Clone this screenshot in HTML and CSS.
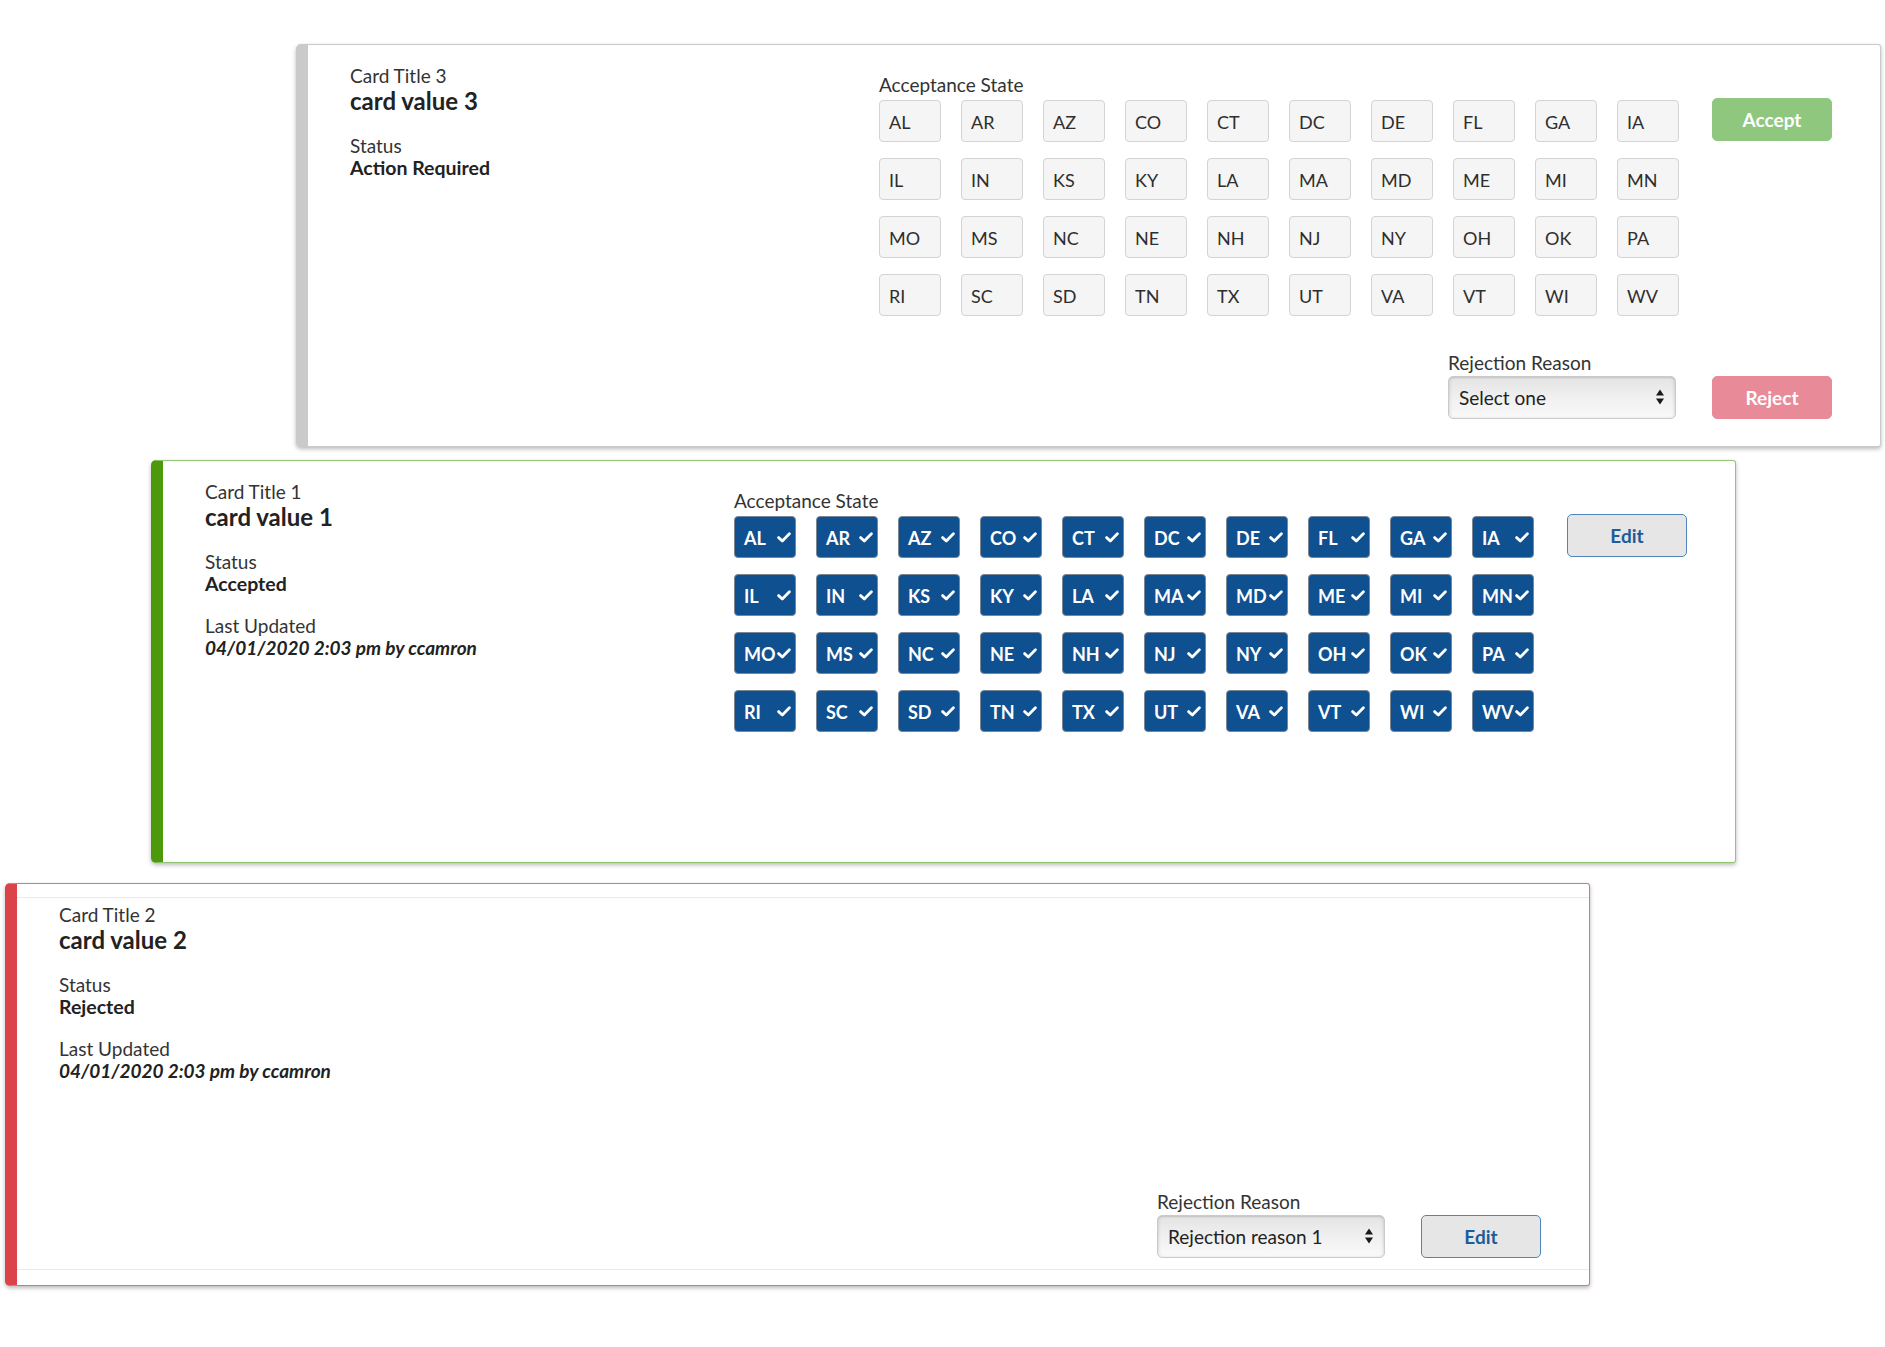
FILE: index.html
```html
<!DOCTYPE html>
<html lang="en">
<head>
<meta charset="utf-8">
<title>Cards</title>
<link rel="stylesheet" href="styles.css">
</head>
<body>
<div class="stack">

  <section class="card card--pending card--shift-2">
    <div class="info">
      <div class="field">
        <div class="label">Card Title 3</div>
        <div class="value value--title">card value 3</div>
      </div>
      <div class="field">
        <div class="label">Status</div>
        <div class="value">Action Required</div>
      </div>
    </div>
    <div class="states">
      <div class="label states-label">Acceptance State</div>
      <div class="state-grid">
        <button class="state">AL</button><button class="state">AR</button><button class="state">AZ</button><button class="state">CO</button><button class="state">CT</button><button class="state">DC</button><button class="state">DE</button><button class="state">FL</button><button class="state">GA</button><button class="state">IA</button>
        <button class="state">IL</button><button class="state">IN</button><button class="state">KS</button><button class="state">KY</button><button class="state">LA</button><button class="state">MA</button><button class="state">MD</button><button class="state">ME</button><button class="state">MI</button><button class="state">MN</button>
        <button class="state">MO</button><button class="state">MS</button><button class="state">NC</button><button class="state">NE</button><button class="state">NH</button><button class="state">NJ</button><button class="state">NY</button><button class="state">OH</button><button class="state">OK</button><button class="state">PA</button>
        <button class="state">RI</button><button class="state">SC</button><button class="state">SD</button><button class="state">TN</button><button class="state">TX</button><button class="state">UT</button><button class="state">VA</button><button class="state">VT</button><button class="state">WI</button><button class="state">WV</button>
      </div>
    </div>
    <div class="actions">
      <button class="btn btn--accept">Accept</button>
    </div>
    <div class="reason">
      <div class="label reason-label">Rejection Reason</div>
      <div class="select-wrap">
        <select class="select"><option>Select one</option></select>
        <svg class="select-arrows" viewBox="0 0 8 16" width="8" height="16"><polygon points="0,6.5 4,0.5 8,6.5"/><polygon points="0,9.5 4,15.5 8,9.5"/></svg>
      </div>
    </div>
    <div class="actions actions--bottom">
      <button class="btn btn--reject">Reject</button>
    </div>
  </section>

  <section class="card card--accepted card--shift-1">
    <div class="info">
      <div class="field">
        <div class="label">Card Title 1</div>
        <div class="value value--title">card value 1</div>
      </div>
      <div class="field">
        <div class="label">Status</div>
        <div class="value">Accepted</div>
      </div>
      <div class="field">
        <div class="label">Last Updated</div>
        <div class="value value--meta">04/01/2020 2:03 pm by ccamron</div>
      </div>
    </div>
    <div class="states">
      <div class="label states-label">Acceptance State</div>
      <div class="state-grid" id="accepted-grid"></div>
    </div>
    <div class="actions">
      <button class="btn btn--edit">Edit</button>
    </div>
  </section>

  <section class="card card--rejected card--shift-0">
    <div class="info">
      <div class="field">
        <div class="label">Card Title 2</div>
        <div class="value value--title">card value 2</div>
      </div>
      <div class="field">
        <div class="label">Status</div>
        <div class="value">Rejected</div>
      </div>
      <div class="field">
        <div class="label">Last Updated</div>
        <div class="value value--meta">04/01/2020 2:03 pm by ccamron</div>
      </div>
    </div>
    <div class="reason">
      <div class="label reason-label">Rejection Reason</div>
      <div class="select-wrap">
        <select class="select"><option>Rejection reason 1</option></select>
        <svg class="select-arrows" viewBox="0 0 8 16" width="8" height="16"><polygon points="0,6.5 4,0.5 8,6.5"/><polygon points="0,9.5 4,15.5 8,9.5"/></svg>
      </div>
    </div>
    <div class="actions actions--bottom">
      <button class="btn btn--edit">Edit</button>
    </div>
  </section>

</div>
<script src="app.js"></script>
</body>
</html>
```

FILE: app.js
```js
(function () {
  var states = ["AL","AR","AZ","CO","CT","DC","DE","FL","GA","IA",
                "IL","IN","KS","KY","LA","MA","MD","ME","MI","MN",
                "MO","MS","NC","NE","NH","NJ","NY","OH","OK","PA",
                "RI","SC","SD","TN","TX","UT","VA","VT","WI","WV"];
  var grid = document.getElementById("accepted-grid");
  var html = "";
  for (var i = 0; i < states.length; i++) {
    html += '<button class="state state--on"><span class="state-code">' + states[i] +
      '</span><svg class="check" viewBox="0 0 14 11" width="14" height="11">' +
      '<polyline points="1.6,5.6 5.3,9 12.4,1.8"/></svg></button>';
  }
  grid.innerHTML = html;
})();
```

FILE: styles.css
```css
* { box-sizing: border-box; }

html, body {
  margin: 0;
  background: #ffffff;
}

body {
  font-family: "Lato", "Open Sans", "Liberation Sans", sans-serif;
  color: #2a2a2a;
}

.stack {
  padding-top: 44px;
  padding-bottom: 40px;
}

.card {
  position: relative;
  width: 1585px;
  height: 403px;
  background: #ffffff;
  border: 1px solid #c9c9c9;
  border-left-width: 12px;
  border-radius: 5px 3px 3px 5px;
  padding: 19px 48px 27px 42px;
  box-shadow: 0 2px 4px rgba(0, 0, 0, 0.28);
  display: grid;
  grid-template-columns: 496px 800px 120px;
  grid-template-rows: 1fr auto;
  column-gap: 33px;
}

.card--shift-2 { margin-left: 296px; }
.card--shift-1 { margin-left: 151px; margin-top: 13px; }
.card--shift-0 { margin-left: 5px; margin-top: 20px; }

.card--pending { border-color: #cacaca; }
.card--accepted { border-color: #8fc773; border-left-color: #4c9a0c; }
.card--rejected { border-color: #e27373; border-left-color: #dc424a; }

.card--rejected::before {
  content: "";
  position: absolute;
  left: 0;
  right: 0;
  top: 13px;
  bottom: 15px;
  border-top: 1px solid #fbe4e7;
  border-bottom: 1px solid #fbe4e7;
  pointer-events: none;
}

.info {
  grid-column: 1;
  grid-row: 1;
}

.field + .field { margin-top: 19px; }

.label {
  font-size: 19px;
  line-height: 23px;
  color: #333333;
}

.value {
  font-size: 19.5px;
  line-height: 22px;
  font-weight: 700;
  color: #222222;
}

.value--title {
  font-size: 24px;
  line-height: 28px;
}

.value--meta {
  font-size: 19px;
  font-style: italic;
}

.states {
  grid-column: 2;
  grid-row: 1;
  padding-top: 9px;
}

.states-label { margin-bottom: 4px; }

.state-grid {
  display: grid;
  grid-template-columns: repeat(10, 62px);
  grid-auto-rows: 42px;
  column-gap: 20px;
  row-gap: 16px;
}

.state {
  font-family: inherit;
  display: flex;
  align-items: center;
  width: 62px;
  height: 42px;
  margin: 0;
  padding: 2px 5px 0 9px;
  background: #f5f5f5;
  border: 1px solid #d3d3d3;
  border-radius: 4px;
  font-size: 18px;
  color: #2e2e2e;
  text-align: left;
}

.state--on {
  justify-content: space-between;
  background: #0f5090;
  border-color: #7d8794;
  color: #ffffff;
  font-weight: 700;
  padding: 1px 4px 0 9px;
}

.state-code { white-space: nowrap; }

.check {
  flex: none;
  fill: none;
  stroke: #ffffff;
  stroke-width: 2.8;
  stroke-linecap: round;
  stroke-linejoin: round;
}

.actions {
  grid-column: 3;
  grid-row: 1;
  padding-top: 34px;
}

.actions--bottom {
  grid-row: 2;
  padding-top: 0;
  align-self: end;
}

.btn {
  font-family: inherit;
  display: block;
  width: 120px;
  height: 43px;
  margin: 0;
  border-radius: 5px;
  font-size: 19px;
  font-weight: 700;
  cursor: pointer;
}

.btn--accept {
  background: #8ec77d;
  border: 1px solid #8ec77d;
  color: #ffffff;
}

.btn--reject {
  background: #e88a98;
  border: 1px solid #e88a98;
  color: #ffffff;
}

.btn--edit {
  background: #e6e6e6;
  border: 1px solid #4f85bb;
  color: #1d5c9a;
}

.reason {
  grid-column: 2;
  grid-row: 2;
  justify-self: end;
  align-self: end;
  width: 228px;
  margin-right: 3px;
}

.reason-label { margin-bottom: 2px; }

.select-wrap {
  position: relative;
  width: 228px;
  height: 43px;
}

.select {
  -webkit-appearance: none;
  appearance: none;
  width: 100%;
  height: 100%;
  margin: 0;
  padding: 0 30px 0 10px;
  font-family: inherit;
  font-size: 19px;
  color: #222222;
  border: 1px solid #cbcbcb;
  border-radius: 5px;
  background: linear-gradient(to bottom, #e4e4e4 0%, #f1f1f1 55%, #f9f9f9 100%);
  box-shadow: inset 0 1px 2px rgba(0, 0, 0, 0.12), inset 2px 0 3px rgba(0, 0, 0, 0.05), inset -2px 0 3px rgba(0, 0, 0, 0.05);
}

.select-arrows {
  position: absolute;
  right: 12px;
  top: 13px;
  fill: #1a1a1a;
  pointer-events: none;
}
```
